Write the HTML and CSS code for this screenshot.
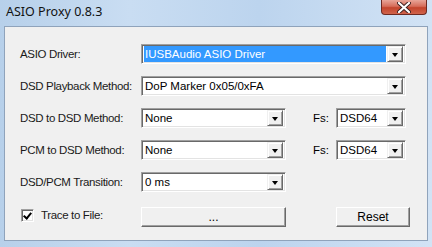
FILE: index.html
```html
<!DOCTYPE html>
<html lang="en">
<head>
  <meta charset="UTF-8" />
  <title>ASIO Proxy 0.8.3</title>
  <link rel="stylesheet" href="styles.css">
</head>
<body>
  <div class="window">
    <div class="titlebar">
      <span class="title">ASIO Proxy 0.8.3</span>
      <div class="close">
        <svg width="14" height="11" viewBox="0 0 14 11">
          <path d="M2 1 L12 10 M12 1 L2 10" stroke="#3b2020" stroke-width="4" stroke-linecap="round"/>
          <path d="M2 1 L12 10 M12 1 L2 10" stroke="#fff" stroke-width="2.2" stroke-linecap="round"/>
        </svg>
      </div>
    </div>

    <div class="client">
      <div class="row">
        <span class="label">ASIO Driver:</span>
        <div class="combo wide selected"><span class="value">IUSBAudio ASIO Driver</span><span class="arrow"></span></div>
      </div>

      <div class="row">
        <span class="label">DSD Playback Method:</span>
        <div class="combo wide"><span class="value">DoP Marker 0x05/0xFA</span><span class="arrow"></span></div>
      </div>

      <div class="row">
        <span class="label">DSD to DSD Method:</span>
        <div class="combo half"><span class="value">None</span><span class="arrow"></span></div>
        <span class="fs">Fs:</span>
        <div class="combo small"><span class="value">DSD64</span><span class="arrow"></span></div>
      </div>

      <div class="row">
        <span class="label">PCM to DSD Method:</span>
        <div class="combo half"><span class="value">None</span><span class="arrow"></span></div>
        <span class="fs">Fs:</span>
        <div class="combo small"><span class="value">DSD64</span><span class="arrow"></span></div>
      </div>

      <div class="row">
        <span class="label">DSD/PCM Transition:</span>
        <div class="combo half"><span class="value">0 ms</span><span class="arrow"></span></div>
      </div>

      <div class="row last">
        <label class="label check-label"><span class="checkbox"></span>Trace to File:</label>
        <button class="btn half-btn">...</button>
        <button class="btn reset">Reset</button>
      </div>
    </div>
  </div>
</body>
</html>
```

FILE: styles.css
```css
body {
  margin: 0;
  font-family: "Liberation Sans", Arial, sans-serif;
  font-size: 11.5px;
  color: #000;
}
.window {
  width: 432px;
  height: 247px;
  background: linear-gradient(90deg, #b7d0ea 0%, #c9ddf2 30%, #bcd4ee 60%, #d2e3f5 100%);
  overflow: hidden;
}
.titlebar {
  height: 26px;
  display: flex;
  justify-content: space-between;
  align-items: flex-start;
}
.title {
  font-family: "Noto Sans", sans-serif;
  font-size: 12.5px;
  margin: 3px 0 0 6px;
  color: #111;
}
.close {
  width: 46px;
  height: 15px;
  margin-right: 5px;
  border: 1px solid #6d2a22;
  border-top: none;
  border-radius: 0 0 4px 4px;
  background: linear-gradient(#e8a598 0%, #d66d5a 45%, #c3442c 55%, #d0644c 100%);
  display: flex;
  justify-content: center;
  align-items: center;
  box-sizing: border-box;
}
.client {
  margin-left: 4px;
  width: 424px;
  height: 215px;
  box-sizing: border-box;
  border: 1px solid #8fa3bb;
  background: #f0f0f0;
  padding: 17px 0 0 15px;
  display: flex;
  flex-direction: column;
  gap: 12px;
}
.row {
  display: flex;
  align-items: center;
  height: 20px;
}
.row.last {
  margin-top: 3px;
}
.label {
  width: 121px;
  flex: none;
  white-space: nowrap;
  letter-spacing: -0.35px;
  color: #1a1a1a;
}
.combo {
  height: 20px;
  box-sizing: border-box;
  background: #fff;
  border-top: 1px solid #a0a0a0;
  border-left: 1px solid #a0a0a0;
  border-right: 1px solid #fff;
  border-bottom: 1px solid #fff;
  box-shadow: inset 1px 1px #696969, inset -1px -1px #e3e3e3;
  display: flex;
  align-items: center;
  padding: 2px;
  font-size: 11.5px;
}
.wide { width: 265px; }
.half { width: 145px; }
.small { width: 70px; }
.value {
  flex: 1;
  height: 16px;
  line-height: 16px;
  padding-left: 1px;
  white-space: nowrap;
  overflow: hidden;
}
.selected .value {
  background: #3399ff;
  color: #fff;
  margin-right: 1px;
}
.arrow {
  width: 16px;
  height: 16px;
  box-sizing: border-box;
  background: #f0f0f0;
  border-top: 1px solid #f0f0f0;
  border-left: 1px solid #f0f0f0;
  border-right: 1px solid #696969;
  border-bottom: 1px solid #696969;
  box-shadow: inset 1px 1px #fff, inset -1px -1px #a0a0a0;
  position: relative;
}
.arrow::after {
  content: "";
  position: absolute;
  left: 4px;
  top: 6px;
  border-left: 3.5px solid transparent;
  border-right: 3.5px solid transparent;
  border-top: 4px solid #000;
}
.fs {
  margin-left: 27px;
  width: 23px;
}
.check-label {
  display: flex;
  align-items: center;
  margin-top: -4px;
}
.checkbox {
  width: 13px;
  height: 13px;
  box-sizing: border-box;
  margin: 0 7px 0 1px;
  background: #fff;
  border-top: 1px solid #a0a0a0;
  border-left: 1px solid #a0a0a0;
  border-right: 1px solid #fff;
  border-bottom: 1px solid #fff;
  box-shadow: inset 1px 1px #696969, inset -1px -1px #e3e3e3;
  position: relative;
}
.checkbox::after {
  content: "";
  position: absolute;
  left: 3px;
  top: 1px;
  width: 3px;
  height: 6px;
  border-right: 2px solid #000;
  border-bottom: 2px solid #000;
  transform: rotate(40deg);
}
.btn {
  height: 20px;
  box-sizing: border-box;
  background: #f0f0f0;
  border-top: 1px solid #fff;
  border-left: 1px solid #fff;
  border-right: 1px solid #696969;
  border-bottom: 1px solid #696969;
  box-shadow: inset -1px -1px #a0a0a0;
  font-family: "Liberation Sans", Arial, sans-serif;
  font-size: 12px;
  padding: 0;
  color: #000;
}
.half-btn { width: 145px; }
.reset {
  width: 74px;
  margin-left: 50px;
}
```
